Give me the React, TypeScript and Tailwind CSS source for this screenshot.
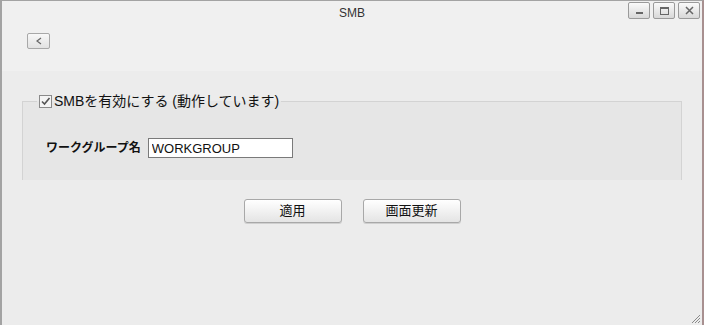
export default function App() {
  const font = { fontFamily: '"Liberation Sans", "Noto Sans CJK JP", sans-serif' };
  return (
    <div
      className="w-[704px] h-[325px] flex flex-col bg-[#f0f0f0] border-l-2 border-t border-r-2 border-l-[#a3a3a3] border-t-[#a3a3a3] border-r-[#a89090] text-[12px] text-black overflow-hidden relative"
      style={font}
    >
      {/* title bar */}
      <div className="h-[22px] flex items-start relative">
        <div className="flex-1 text-center pt-[3px] text-[12px] text-[#333]">SMB</div>
        <div className="absolute right-[2px] top-[1px] flex gap-[3px]">
          <WinBtn>
            <div className="w-[7px] h-[2px] bg-[#666] mt-[5px]" />
          </WinBtn>
          <WinBtn>
            <div className="w-[9px] h-[8px] border border-[#666] border-t-2" />
          </WinBtn>
          <WinBtn>
            <svg width="9" height="9" viewBox="0 0 9 9">
              <path d="M1 1 L8 8 M8 1 L1 8" stroke="#666" strokeWidth="1.5" />
            </svg>
          </WinBtn>
        </div>
      </div>

      {/* back button row */}
      <div className="h-[48px] pl-[25px] pt-[10px]">
        <button className="w-[23px] h-[16px] border border-[#a8a8a8] rounded-[2px] bg-gradient-to-b from-[#f8f8f8] to-[#e2e2e2] flex items-center justify-center">
          <svg width="8" height="8" viewBox="0 0 8 8">
            <path d="M6 1 L2 4 L6 7" fill="none" stroke="#666" strokeWidth="1.2" />
          </svg>
        </button>
      </div>

      {/* content */}
      <div className="flex-1 bg-[#ececec] flex flex-col">
        <fieldset className="ml-[20px] mr-[20px] mt-[20px] h-[89px] bg-[#e6e6e6] border-l border-t border-r border-[#d3d3d3]">
          <legend className="ml-[14px] px-[2px] flex items-center gap-[2px]">
            <span className="w-[13px] h-[13px] border border-[#8a8a8a] bg-[#f4f4f4] flex items-center justify-center">
              <svg width="11" height="11" viewBox="0 0 11 11">
                <path d="M2 5.5 L4.5 8 L9.5 2" fill="none" stroke="#555" strokeWidth="1.6" />
              </svg>
            </span>
            <span className="text-[14px] text-[#111]">SMBを有効にする (動作しています)</span>
          </legend>
          <div className="flex items-center mt-[26px] pl-[23px] gap-[7px]">
            <span className="font-bold text-[12px] text-[#111]">ワークグループ名</span>
            <input
              className="w-[145px] h-[20px] border border-[#7a7a7a] bg-white px-[3px] text-[13px] text-[#111] outline-none"
              style={font}
              defaultValue="WORKGROUP"
            />
          </div>
        </fieldset>

        <div className="flex justify-center gap-[21px] mt-[19px]">
          <ActionBtn>適用</ActionBtn>
          <ActionBtn>画面更新</ActionBtn>
        </div>

        {/* resize grip */}
        <svg className="absolute right-[1px] bottom-[1px]" width="11" height="11" viewBox="0 0 11 11">
          <path d="M10 2 L2 10 M10 5 L5 10 M10 8 L8 10" stroke="#8a8a8a" strokeWidth="1" />
        </svg>
      </div>
    </div>
  );
}

function WinBtn({ children }: { children: React.ReactNode }) {
  return (
    <div className="w-[22px] h-[17px] border border-[#9a9a9a] rounded-[2px] bg-gradient-to-b from-[#fafafa] to-[#d8d8d8] flex items-center justify-center">
      {children}
    </div>
  );
}

function ActionBtn({ children }: { children: React.ReactNode }) {
  return (
    <button className="w-[98px] h-[24px] border border-[#a8a8a8] rounded-[3px] bg-gradient-to-b from-[#ffffff] to-[#e4e4e4] text-[13px] text-[#111] shadow-[0_1px_0_#cfcfcf]">
      {children}
    </button>
  );
}
